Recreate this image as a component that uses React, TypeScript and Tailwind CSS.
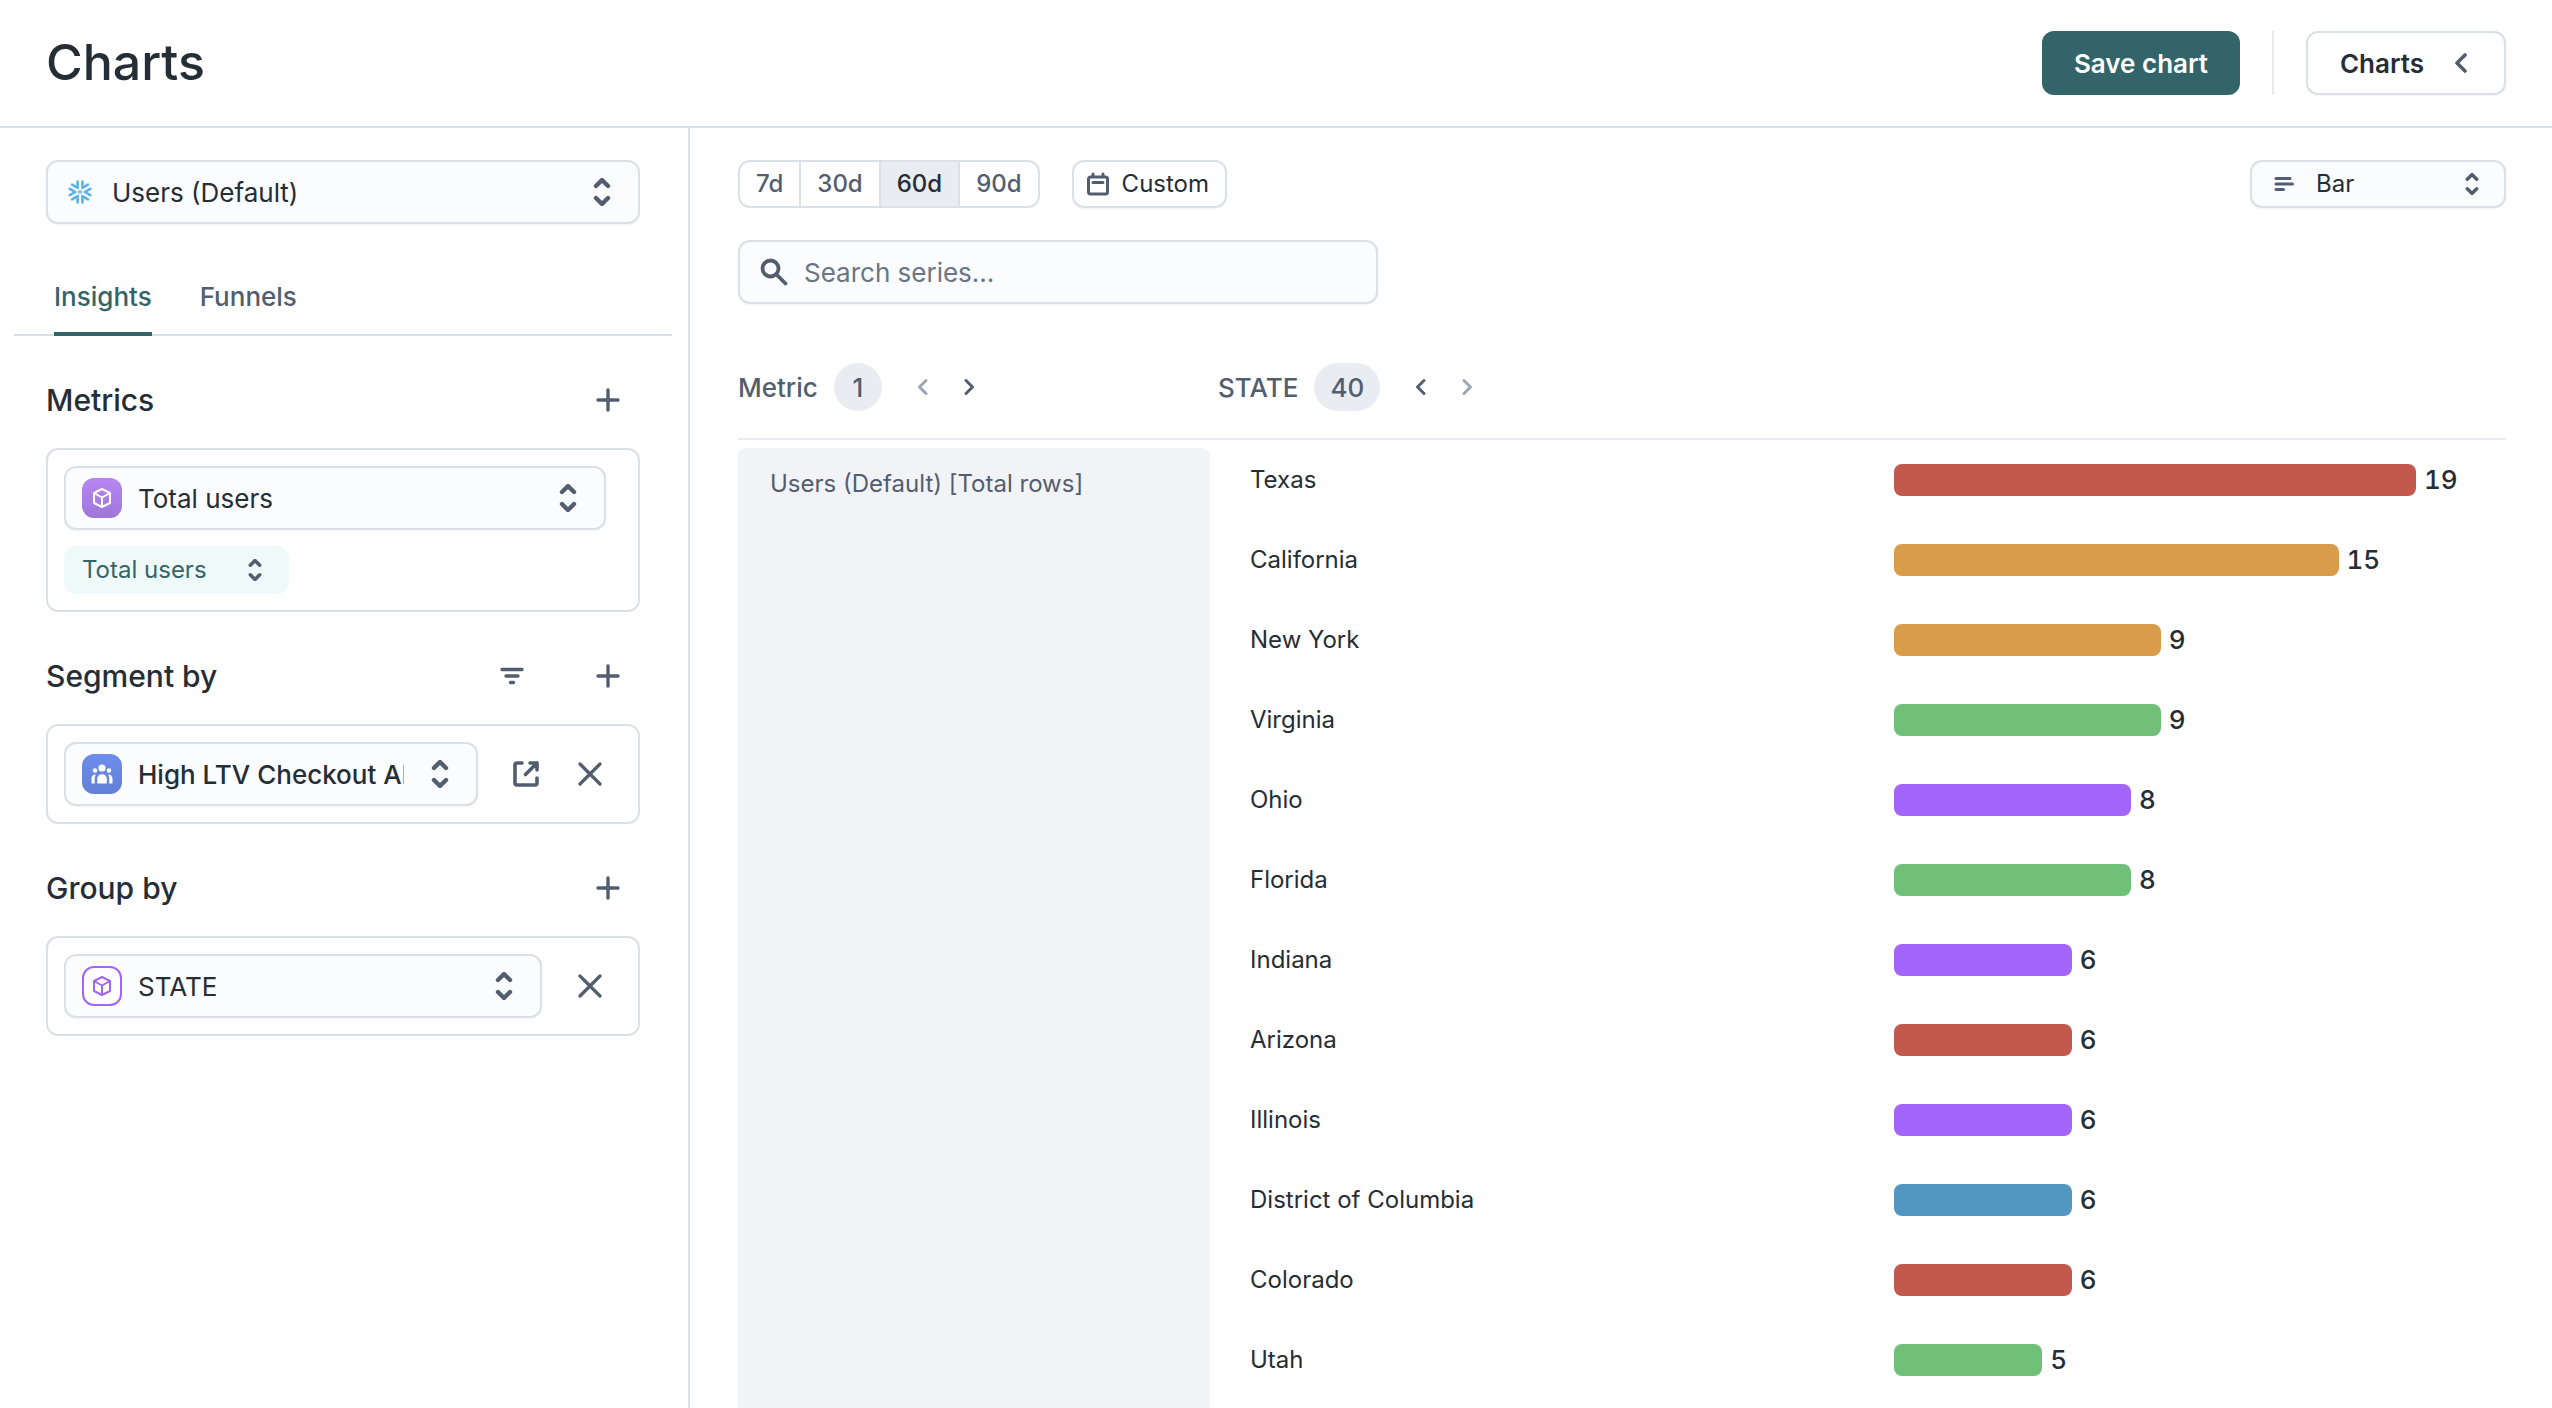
import { useState } from 'react'

const Updown = ({ className }: { className: string }) => (
  <svg viewBox="0 0 20 28" className={`pointer-events-none absolute w-5 ${className}`} fill="none" stroke="#525e6f" strokeWidth="4.400" strokeLinecap="round" strokeLinejoin="round">
    <path d="M4 8l6-6 6 6M4 20l6 6 6-6" />
  </svg>
)

const Plus = () => (
  <svg viewBox="0 0 24 24" className="size-6" fill="none" stroke="#525e6f" strokeWidth="3.400" strokeLinecap="round">
    <path d="M12 2v20M2 12h20" />
  </svg>
)

const Close = () => (
  <svg viewBox="0 0 24 24" className="size-6" fill="none" stroke="#525e6f" strokeWidth="3.200" strokeLinecap="round">
    <path d="M2 2l20 20M22 2L2 22" />
  </svg>
)

const Chevron = ({ dir, className = '' }: { dir: 'left' | 'right'; className?: string }) => (
  <svg viewBox="0 0 12 18" className={`h-[18px] w-3 ${className}`} fill="none" stroke="currentColor" strokeWidth="3" strokeLinecap="round" strokeLinejoin="round">
    <path d={dir === 'left' ? 'M9 2.500L2.500 9 9 15.500' : 'M3 2.500L9.500 9 3 15.500'} />
  </svg>
)

const Cube = ({ color }: { color: string }) => (
  <svg viewBox="0 0 24 24" className="size-6" fill="none" stroke={color} strokeWidth="2" strokeLinejoin="round">
    <path d="M12 3l8 4v10l-8 4-8-4V7zM4 7l8 4.500 8-4.500M12 11.500v9.500" />
  </svg>
)

const Snowflake = () => (
  <svg viewBox="0 0 24 24" className="pointer-events-none absolute left-5.5 size-6" fill="none" stroke="#56b4e9" strokeWidth="2.600" strokeLinecap="round" strokeLinejoin="round">
    {[0, 60, 120, 180, 240, 300].map((angle) => (
      <path key={angle} d="M22.300 8.800L16.800 12l5.500 3.200" transform={`rotate(${angle} 12 12)`} />
    ))}
    <path d="M12 10.300l1.700 1.700-1.700 1.700-1.700-1.700z" strokeWidth="1.200" />
  </svg>
)

const People = () => (
  <svg viewBox="0 0 22 20" className="h-5 w-[22px]" fill="white">
    <circle cx="11" cy="4" r="3.600" />
    <circle cx="4" cy="6.500" r="2.300" />
    <circle cx="18" cy="6.500" r="2.300" />
    <path d="M6.200 19.500v-4.500a4.800 4.800 0 0 1 9.600 0v4.500zM.5 19.500v-4.500c0-3 1.500-4.700 4.300-4.500-1 2-1.100 4-1 9zM21.500 19.500v-4.500c0-3-1.500-4.700-4.300-4.500 1 2 1.100 4 1 9z" />
  </svg>
)

const series = [
  { name: 'Texas', value: 19, color: 'bg-[#c2594c]' },
  { name: 'California', value: 15, color: 'bg-[#d99c4b]' },
  { name: 'New York', value: 9, color: 'bg-[#d99c4b]' },
  { name: 'Virginia', value: 9, color: 'bg-[#70c077]' },
  { name: 'Ohio', value: 8, color: 'bg-[#a264f9]' },
  { name: 'Florida', value: 8, color: 'bg-[#70c077]' },
  { name: 'Indiana', value: 6, color: 'bg-[#a264f9]' },
  { name: 'Arizona', value: 6, color: 'bg-[#c2594c]' },
  { name: 'Illinois', value: 6, color: 'bg-[#a264f9]' },
  { name: 'District of Columbia', value: 6, color: 'bg-[#5197c2]' },
  { name: 'Colorado', value: 6, color: 'bg-[#c2594c]' },
  { name: 'Utah', value: 5, color: 'bg-[#70c077]' },
]

const field = 'w-full appearance-none rounded-xl border-2 border-[#dbe0e7] bg-[#fbfcfe] outline-none shadow-xs'

const SectionHeader = ({ title, filter }: { title: string; filter?: boolean }) => (
  <div className="flex h-28 items-center gap-8 pt-4">
    <h2 className="flex-1 text-3xl font-medium">{title}</h2>
    {filter && (
      <button aria-label="Filter segments" className="flex size-16 items-center justify-center">
        <svg viewBox="0 0 24 18" className="h-[18px] w-6" fill="none" stroke="#525e6f" strokeWidth="3.400" strokeLinecap="round">
          <path d="M2 2.500h20M6 9h12M10.500 15.500h3" />
        </svg>
      </button>
    )}
    <button aria-label={`Add to ${title}`} className="flex size-16 items-center justify-center">
      <Plus />
    </button>
  </div>
)

const ColumnHeader = ({ label, count, hasPrev, hasNext }: { label: string; count: number; hasPrev?: boolean; hasNext?: boolean }) => (
  <div className="flex items-center">
    {label}
    <span className="ml-4 flex h-12 min-w-12 items-center justify-center rounded-full bg-[#e9ecf1] px-4">{count}</span>
    <button aria-label={`Previous ${label}`} className="ml-[18px] flex size-[46px] items-center justify-center">
      <Chevron dir="left" className={hasPrev ? '' : 'text-[#9ba6b4]'} />
    </button>
    <button aria-label={`Next ${label}`} className="flex size-[46px] items-center justify-center">
      <Chevron dir="right" className={hasNext ? '' : 'text-[#9ba6b4]'} />
    </button>
  </div>
)

export default function App() {
  const [range, setRange] = useState('60d')

  return (
    <div className="flex h-screen flex-col overflow-hidden bg-white font-[Inter,sans-serif] text-[#252d36]">
      <header className="flex h-32 shrink-0 items-center justify-between border-b-2 border-[#dbe0e7] px-[46px]">
        <h1 className="pb-0.5 text-[50px] font-medium">Charts</h1>
        <div className="flex items-center gap-8">
          <button className="h-16 rounded-xl bg-[#33646a] px-8 text-[26px] font-semibold text-white">Save chart</button>
          <div className="h-16 w-0.5 bg-[#e7ebf0]" />
          <button className="flex h-16 items-center gap-7 rounded-xl border-2 border-[#dbe0e7] px-8 text-[26px] font-semibold shadow-xs">
            Charts
            <svg viewBox="0 0 20 20" className="size-5" fill="none" stroke="#525e6f" strokeWidth="3.600" strokeLinecap="round" strokeLinejoin="round">
              <path d="M13 2L5 10l8 8" />
            </svg>
          </button>
        </div>
      </header>

      <div className="flex min-h-0 flex-1">
        <aside className="w-[690px] shrink-0 border-r-2 border-[#dbe0e7] pt-8">
          <div className="relative ml-[46px] mr-12 flex items-center">
            <select aria-label="Parent model" className={`${field} h-16 pl-16 text-[26px]`}>
              <option>Users (Default)</option>
            </select>
            <Snowflake />
            <Updown className="right-7 h-7" />
          </div>

          <nav className="ml-3.5 mr-4 mt-10 flex h-[72px] gap-12 border-b-2 border-[#dbe0e7] px-10 text-[26px] font-medium">
            <button className="-mb-0.5 border-b-4 border-[#33646a] pb-1 text-[#33646a]">Insights</button>
            <button className="-mb-0.5 border-b-4 border-transparent pb-1 text-[#525e6f]">Funnels</button>
          </nav>

          <div className="ml-[46px] mr-12">
            <SectionHeader title="Metrics" />
            <div className="flex flex-col items-start gap-4 rounded-xl border-2 border-[#dbe0e7] p-4">
              <div className="flex w-full pr-4">
                <div className="relative flex flex-1 items-center">
                  <span className="pointer-events-none absolute left-4.5 flex size-10 items-center justify-center rounded-xl bg-linear-to-b from-[#b685f3] to-[#a077d8]">
                    <Cube color="white" />
                  </span>
                  <select aria-label="Metric" className={`${field} h-16 pl-[72px] text-[26px]`}>
                    <option>Total users</option>
                  </select>
                  <Updown className="right-7 h-7" />
                </div>
              </div>
              <div className="relative flex items-center">
                <select aria-label="Aggregation" className="h-12 appearance-none rounded-xl bg-[#eff9fa] pl-4.5 pr-[82px] text-2xl text-[#33646a]">
                  <option>Total users</option>
                </select>
                <Updown className="right-6 h-[22px]" />
              </div>
            </div>

            <SectionHeader title="Segment by" filter />
            <div className="flex items-center rounded-xl border-2 border-[#dbe0e7] p-4">
              <div className="relative flex min-w-0 flex-1 items-center">
                <span className="pointer-events-none absolute left-4.5 flex size-10 items-center justify-center rounded-xl bg-linear-to-b from-[#6e8eec] to-[#637fd6]">
                  <People />
                </span>
                <select aria-label="Segment" className={`${field} h-16 pl-[72px] pr-[72px] text-[26px] font-medium`}>
                  <option>High LTV Checkout Abandoners</option>
                </select>
                <Updown className="right-7 h-7" />
              </div>
              <button aria-label="Open segment" className="ml-4 flex size-16 items-center justify-center">
                <svg viewBox="0 0 26 26" className="size-[26px]" fill="none" stroke="#525e6f" strokeWidth="3.600" strokeLinecap="round" strokeLinejoin="round">
                  <path d="M9 2H4a2 2 0 0 0-2 2v18a2 2 0 0 0 2 2h18a2 2 0 0 0 2-2v-5M17 2h7v7M24 2L12.500 13.500" />
                </svg>
              </button>
              <button aria-label="Remove segment" className="flex size-16 items-center justify-center">
                <Close />
              </button>
            </div>

            <SectionHeader title="Group by" />
            <div className="flex items-center gap-4 rounded-xl border-2 border-[#dbe0e7] p-4">
              <div className="relative flex min-w-0 flex-1 items-center">
                <span className="pointer-events-none absolute left-4.5 flex size-10 items-center justify-center rounded-xl border-2 border-[#a264f9] bg-white">
                  <Cube color="#a264f9" />
                </span>
                <select aria-label="Group by column" className={`${field} h-16 pl-[72px] text-[26px]`}>
                  <option>STATE</option>
                </select>
                <Updown className="right-7 h-7" />
              </div>
              <button aria-label="Remove group" className="flex size-16 items-center justify-center">
                <Close />
              </button>
            </div>
          </div>
        </aside>

        <main className="flex min-w-0 flex-1 flex-col pl-12 pr-[46px] pt-8">
          <div className="flex items-center gap-8 text-2xl">
            <div className="flex h-12 divide-x-2 divide-[#dbe0e7] overflow-hidden rounded-xl border-2 border-[#dbe0e7] font-medium text-[#525e6f]">
              {['7d', '30d', '60d', '90d'].map((r) => (
                <button key={r} onClick={() => setRange(r)} className={r === range ? 'bg-[#e9ecf1] px-4 text-[#252d36]' : 'px-4'}>
                  {r}
                </button>
              ))}
            </div>
            <button className="flex h-12 items-center gap-3 rounded-xl border-2 border-[#dbe0e7] pl-3 pr-4 shadow-xs">
              <svg viewBox="0 0 24 24" className="size-6" fill="none" stroke="#525e6f" strokeWidth="3" strokeLinecap="round" strokeLinejoin="round">
                <path d="M4.500 5h15a2 2 0 0 1 2 2v13a2 2 0 0 1-2 2h-15a2 2 0 0 1-2-2V7a2 2 0 0 1 2-2zM7 10.500h10M7 2v3M17 2v3" />
              </svg>
              Custom
            </button>
            <div className="relative ml-auto flex w-64 items-center">
              <svg viewBox="0 0 20 16" className="pointer-events-none absolute left-6 h-4 w-5" fill="none" stroke="#525e6f" strokeWidth="3" strokeLinecap="round">
                <path d="M2 2.500h14M2 8h16.500M2 13.500h7.500" />
              </svg>
              <select aria-label="Chart type" className={`${field} h-12 pl-16`}>
                <option>Bar</option>
              </select>
              <Updown className="right-6 h-[22px]" />
            </div>
          </div>

          <div className="relative mt-8 flex w-[640px] items-center">
            <svg viewBox="0 0 28 28" className="pointer-events-none absolute left-5.5 size-7" fill="none" stroke="#525e6f" strokeWidth="3.800" strokeLinecap="round">
              <path d="M10.500 2.500a8 8 0 1 0 0 16 8 8 0 0 0 0-16zM17 17l8.500 8.500" />
            </svg>
            <input type="search" aria-label="Search series" placeholder="Search series..." className={`${field} h-16 pl-16 text-[26px] placeholder:text-[#697586]`} />
          </div>

          <div className="mt-9 grid h-[100px] shrink-0 grid-cols-[480px_1fr] items-center border-b-2 border-[#e7ebf0] pb-1 text-[26px] font-medium text-[#525e6f]">
            <ColumnHeader label="Metric" count={1} hasNext />
            <ColumnHeader label="STATE" count={40} hasPrev />
          </div>

          <div className="flex min-h-0 flex-1 gap-2">
            <div className="mt-2 w-[472px] shrink-0 rounded-t-lg bg-[#f2f3f7] px-8 py-5 text-2xl text-[#525e6f]">
              Users (Default) [Total rows]
            </div>
            <ul className="flex-1 pl-8">
              {series.map((s) => (
                <li key={s.name} className="flex h-20 items-center text-2xl">
                  <span className="flex-1">{s.name}</span>
                  <span className="flex w-[612px] items-center gap-2">
                    <span className={`h-8 rounded-lg ${s.color}`} style={{ width: `${(s.value / 19) * 92}%` }} />
                    <span className="w-[82px] shrink-0 text-[26px] font-medium tabular-nums">{s.value}</span>
                  </span>
                </li>
              ))}
            </ul>
          </div>
        </main>
      </div>
    </div>
  )
}
